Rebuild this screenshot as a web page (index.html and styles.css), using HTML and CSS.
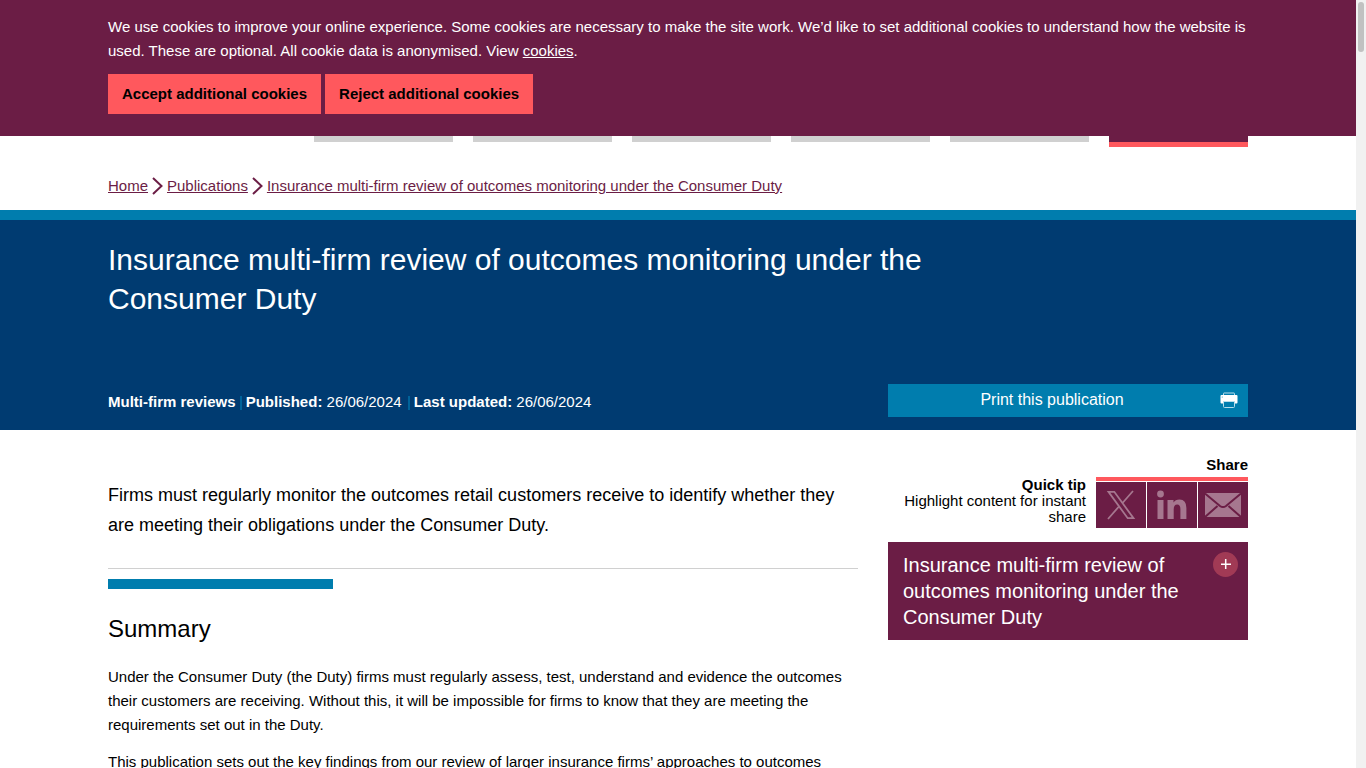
FILE: index.html
```html
<!DOCTYPE html>
<html lang="en">
<head>
<meta charset="utf-8">
<meta name="viewport" content="width=device-width, initial-scale=1">
<title>Insurance multi-firm review of outcomes monitoring under the Consumer Duty</title>
<link rel="stylesheet" href="styles.css">
</head>
<body>
<div class="viewport">
  <div class="page">
    <section class="cookie-banner" aria-label="Cookies">
      <div class="container">
        <p class="cookie-text">We use cookies to improve your online experience. Some cookies are necessary to make the site work. We’d like to set additional cookies to understand how the website is used. These are optional. All cookie data is anonymised. View <a href="#cookies">cookies</a>.</p>
        <div class="cookie-actions">
          <button type="button" class="cookie-button">Accept additional cookies</button>
          <button type="button" class="cookie-button">Reject additional cookies</button>
        </div>
      </div>
    </section>

    <div class="container">
      <div class="tabs">
        <span class="tab"></span>
        <span class="tab"></span>
        <span class="tab"></span>
        <span class="tab"></span>
        <span class="tab"></span>
        <span class="tab tab-active"></span>
      </div>
      <nav class="breadcrumb" aria-label="Breadcrumb">
        <a href="#home">Home</a>
        <svg class="chevron" viewBox="0 0 11 18" aria-hidden="true"><path d="M1 1l8.500 8L1 17"/></svg>
        <a href="#publications">Publications</a>
        <svg class="chevron" viewBox="0 0 11 18" aria-hidden="true"><path d="M1 1l8.500 8L1 17"/></svg>
        <a href="#review">Insurance multi-firm review of outcomes monitoring under the Consumer Duty</a>
      </nav>
    </div>

    <header class="hero">
      <div class="container hero-inner">
        <h1 class="hero-title">Insurance multi-firm review of outcomes monitoring under the Consumer Duty</h1>
        <div class="hero-bottom">
          <p class="meta">
            <strong>Multi-firm reviews</strong>
            <span class="meta-item"><strong>Published:</strong> 26/06/2024</span>
            <span class="meta-item meta-item-wide"><strong>Last updated:</strong> 26/06/2024</span>
          </p>
          <button type="button" class="print-button">
            <span class="print-label">Print this publication</span>
            <svg class="print-icon" viewBox="0 0 18 17" aria-hidden="true">
              <path class="print-outline" d="M3.500 3V1.500q0-.5.5-.5h10q.5 0 .5.500V3"/>
              <path class="print-body" d="M1.500 3h15q1 0 1 1v6.500q0 1-1 1h-2.500V9.500H4v2H1.500q-1 0-1-1V4q0-1 1-1z"/>
              <path class="print-outline" d="M3.500 9.500h11v5q0 1-1 1h-9q-1 0-1-1z"/>
              <circle class="print-light" cx="2.200" cy="5" r=".5"/>
            </svg>
          </button>
        </div>
      </div>
    </header>

    <div class="container columns">
      <main class="content">
        <p class="lead">Firms must regularly monitor the outcomes retail customers receive to identify whether they are meeting their obligations under the Consumer Duty.</p>
        <h2 class="section-title">Summary</h2>
        <p class="body-text">Under the Consumer Duty (the Duty) firms must regularly assess, test, understand and evidence the outcomes their customers are receiving. Without this, it will be impossible for firms to know that they are meeting the requirements set out in the Duty.</p>
        <p class="body-text">This publication sets out the key findings from our review of larger insurance firms’ approaches to outcomes monitoring under the Duty.</p>
      </main>

      <aside class="sidebar">
        <p class="share-title">Share</p>
        <div class="share">
          <p class="quick-tip"><strong>Quick tip</strong><br>Highlight content for instant share</p>
          <div class="share-links">
            <a class="share-link" href="#x" aria-label="Share on X">
              <svg class="share-icon" viewBox="0 0 50 46" aria-hidden="true">
                <path class="icon-line" d="M12.500 9.800h5.800l19.200 26.400h-5.800zM37 9L26.500 21M22.500 25L12 37"/>
              </svg>
            </a>
            <a class="share-link" href="#linkedin" aria-label="Share on LinkedIn">
              <svg class="share-icon" viewBox="0 0 50 46" aria-hidden="true">
                <circle class="icon-fill" cx="13.500" cy="12" r="3.400"/>
                <path class="icon-fill" d="M10.500 18h6v19h-6zM20.500 18h6v2.600q1.800-3.100 6-3.100 6.900 0 6.900 8.500v11h-6V27q0-4.600-3.200-4.600-3.500 0-3.500 4.800V37h-6.200z"/>
              </svg>
            </a>
            <a class="share-link" href="#email" aria-label="Share by email">
              <svg class="share-icon" viewBox="0 0 50 46" aria-hidden="true">
                <path class="icon-fill" d="M8 11h34q1 0 1 1v22q0 1-1 1H8q-1 0-1-1V12q0-1 1-1z"/>
                <path class="icon-cut" d="M7 11.500l15 12.500q3 2.200 6 0l15-12.500M7 35l12.500-11M43 35L30.500 24"/>
              </svg>
            </a>
          </div>
        </div>
        <div class="contents">
          <h2 class="contents-title">Insurance multi-firm review of outcomes monitoring under the Consumer Duty</h2>
          <button type="button" class="expand-button" aria-label="Expand contents">
            <svg class="expand-icon" viewBox="0 0 25 25" aria-hidden="true"><path d="M12.700 7v10M8 12.300h10"/></svg>
          </button>
        </div>
      </aside>
    </div>
  </div>
  <div class="scroll-track"><div class="scroll-thumb"></div></div>
</div>
</body>
</html>
```
FILE: styles.css
```css
* {
  box-sizing: border-box;
}

body {
  margin: 0;
  background: #fff;
  color: #000;
  font-family: "Liberation Sans", Arial, sans-serif;
  font-size: 15px;
  line-height: 24px;
}

h1, h2, p {
  margin: 0;
  font-weight: 400;
}

button {
  border: 0;
  font-family: inherit;
  cursor: pointer;
}

svg {
  display: block;
}

.viewport {
  display: grid;
  grid-template-columns: minmax(0, 1fr) 10px;
  height: 100vh;
  overflow: hidden;
}

.page {
  min-width: 0;
  overflow: hidden;
}

.container {
  width: 100%;
  max-width: 1172px;
  margin: 0 auto;
  padding: 0 16px;
}

.cookie-banner {
  padding: 15px 0 22px;
  background: #6b1d45;
  color: #fff;
}

.cookie-text a {
  color: inherit;
}

.cookie-actions {
  display: flex;
  flex-wrap: wrap;
  gap: 4px;
  margin-top: 11px;
}

.cookie-button {
  padding: 8px 14px;
  background: #ff585d;
  color: #000;
  font-size: 15px;
  font-weight: 700;
  line-height: 24px;
}

.tabs {
  display: grid;
  grid-template-columns: repeat(6, 1fr);
  align-items: start;
  gap: 20px;
  margin-left: 206px;
}

.tab {
  height: 6px;
  background: #d0d0d0;
}

.tab-active {
  height: 11px;
  border-bottom: 5px solid #ff585d;
  background: #6b1d45;
}

.breadcrumb {
  display: flex;
  align-items: center;
  gap: 4px;
  padding: 27px 0 12px;
}

.breadcrumb a {
  color: #6b1d45;
}

.chevron {
  flex: none;
  width: 11px;
  height: 18px;
  fill: none;
  stroke: #6b1d45;
  stroke-width: 2;
}

.hero {
  border-top: 10px solid #007dae;
  background: #003b71;
  color: #fff;
}

.hero-inner {
  display: flex;
  flex-direction: column;
  justify-content: space-between;
  min-height: 210px;
  padding-top: 20px;
  padding-bottom: 13px;
}

.hero-title {
  max-width: 860px;
  font-size: 30px;
  line-height: 39px;
}

.hero-bottom {
  display: flex;
  align-items: center;
  justify-content: space-between;
  gap: 30px;
}

.meta {
  padding-top: 2px;
}

.meta-item {
  padding-left: 6px;
  background: linear-gradient(#00639a, #00639a) left bottom / 2px 14px no-repeat;
}

.meta-item-wide {
  margin-left: 2px;
}

.print-button {
  display: flex;
  align-items: center;
  width: 360px;
  padding: 4px 10px 5px;
  background: #007dae;
  color: #fff;
  font-size: 16px;
  line-height: 24px;
}

.print-label {
  flex: 1;
  padding-right: 14px;
}

.print-icon {
  width: 18px;
  height: 17px;
}

.print-outline {
  fill: #007dae;
  stroke: #b8deeb;
}

.print-body {
  fill: #fff;
}

.print-light {
  fill: #007dae;
}

.columns {
  display: grid;
  grid-template-columns: minmax(0, 1fr) 360px;
  gap: 30px;
  align-items: start;
}

.content {
  padding-top: 50px;
}

.lead {
  padding-bottom: 28px;
  border-bottom: 1px solid #d0d0d0;
  font-size: 18px;
  line-height: 30px;
}

.section-title {
  margin-top: 10px;
  padding-top: 34px;
  background: linear-gradient(#007dae, #007dae) left top / 30% 10px no-repeat;
  font-size: 24px;
  line-height: 32px;
}

.body-text {
  margin-top: 13px;
}

.section-title + .body-text {
  margin-top: 20px;
}

.sidebar {
  padding-top: 23px;
}

.share-title {
  font-weight: 700;
  text-align: right;
}

.share {
  display: flex;
  gap: 10px;
}

.quick-tip {
  flex: 1;
  line-height: 16px;
  text-align: right;
}

.share-links {
  display: grid;
  grid-template-columns: repeat(3, 50px);
  gap: 1px;
  padding-top: 1px;
  border-top: 4px solid #ff585d;
}

.share-link {
  background: #6b1d45;
}

.share-icon {
  width: 50px;
  height: 46px;
}

.icon-line {
  fill: none;
  stroke: #a6778f;
  stroke-width: 1.8;
}

.icon-fill {
  fill: #a6778f;
}

.icon-cut {
  fill: none;
  stroke: #6b1d45;
  stroke-width: 2;
}

.contents {
  display: flex;
  align-items: flex-start;
  justify-content: space-between;
  gap: 10px;
  margin-top: 14px;
  padding: 10px 10px 10px 15px;
  background: #6b1d45;
  color: #fff;
}

.contents-title {
  flex: 1;
  font-size: 20px;
  line-height: 26px;
}

.expand-button {
  width: 25px;
  height: 25px;
  padding: 0;
  border-radius: 50%;
  background: #a13a55;
}

.expand-icon {
  width: 25px;
  height: 25px;
  fill: none;
  stroke: #fff;
  stroke-width: 1.5;
}

.scroll-track {
  padding: 2px;
  background: #f1f1f1;
}

.scroll-thumb {
  height: 50px;
  border-radius: 3px;
  background: #c1c1c1;
}
```
